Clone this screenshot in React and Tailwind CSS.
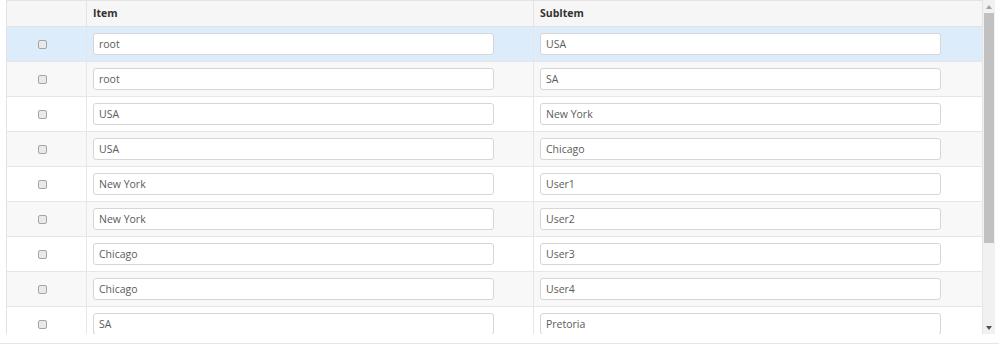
import React from "react";

const rows = [
  ["root", "USA"],
  ["root", "SA"],
  ["USA", "New York"],
  ["USA", "Chicago"],
  ["New York", "User1"],
  ["New York", "User2"],
  ["Chicago", "User3"],
  ["Chicago", "User4"],
  ["SA", "Pretoria"],
];

const Field = ({ value }) => (
  <div className="w-[401px] h-[22px] flex items-center pt-[1px] px-[5px] bg-white border border-[#d6d6d6] rounded-[3px] text-[10.5px] text-[#5c5c5c]">
    {value}
  </div>
);

const Check = () => (
  <span className="block w-[9px] h-[9px] rounded-[2px] border border-[#a5a5a5] bg-[#e9e9e9]" />
);

const App = () => {
  return (
    <div
      className="w-[999px] h-[348px] bg-white flex flex-col overflow-hidden"
      style={{ fontFamily: '"Open Sans", "Noto Sans", sans-serif' }}
    >
      {/* grid + scrollbar */}
      <div className="ml-[6px] h-[334px] flex border-l border-[#e3e3e3]">
        <div className="w-[976px] h-full overflow-hidden">
          {/* header */}
          <div className="grid grid-cols-[80px_447px_449px] h-[27px] bg-[#f6f6f6] border-t border-b border-[#e3e3e3] text-[10.5px] font-bold text-[#333]">
            <div className="border-r border-[#e3e3e3]" />
            <div className="flex items-center pl-[6px] border-r border-[#e3e3e3]">Item</div>
            <div className="flex items-center pl-[6px] border-r border-[#e3e3e3]">SubItem</div>
          </div>

          {/* rows */}
          {rows.map(([item, sub], i) => (
            <div
              key={i}
              className={
                "grid grid-cols-[80px_447px_449px] h-[35px] shrink-0 border-b border-[#e6e6e6] " +
                (i === 0 ? "bg-[#ddecfb]" : i % 2 === 1 ? "bg-[#f8f8f8]" : "bg-white")
              }
            >
              <div className="flex items-center pl-[31px] border-r border-[#e6e6e6]">
                <Check />
              </div>
              <div className="flex items-center pl-[6px] border-r border-[#e6e6e6]">
                <Field value={item} />
              </div>
              <div className="flex items-center pl-[6px] border-r border-[#e6e6e6]">
                <Field value={sub} />
              </div>
            </div>
          ))}
        </div>

        {/* scrollbar */}
        <div className="w-[12px] h-full bg-[#f1f1f1] flex flex-col items-center">
          <div className="h-[13px] flex items-center justify-center">
            <span className="w-0 h-0 border-l-[3px] border-r-[3px] border-b-[4px] border-l-transparent border-r-transparent border-b-[#a3a3a3]" />
          </div>
          <div className="w-[10px] h-[230px] bg-[#c1c1c1]" />
          <div className="flex-1" />
          <div className="h-[13px] flex items-center justify-center">
            <span className="w-0 h-0 border-l-[3px] border-r-[3px] border-t-[4px] border-l-transparent border-r-transparent border-t-[#505050]" />
          </div>
        </div>
      </div>

      {/* bottom rule */}
      <div className="mt-[9px] border-t border-[#e6e6e6]" />
    </div>
  );
};

export default App;
